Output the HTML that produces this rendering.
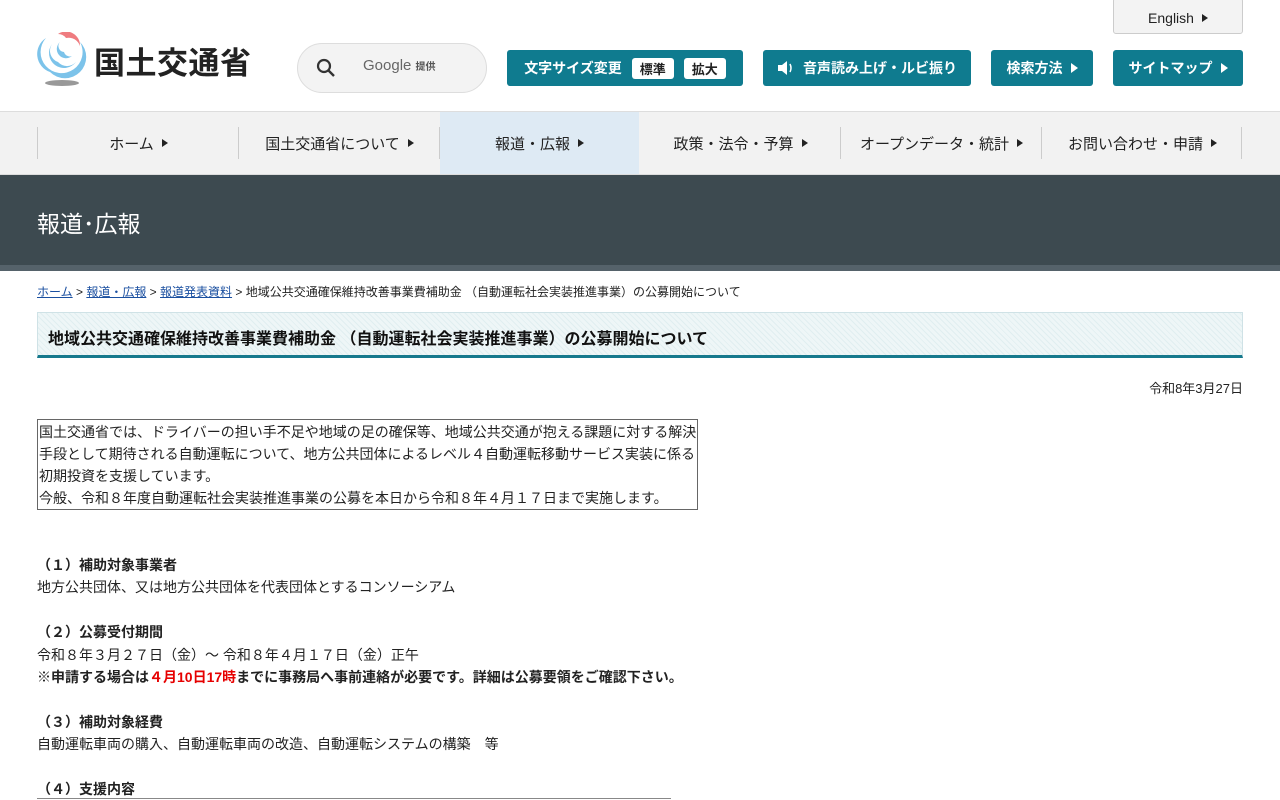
<!DOCTYPE html>
<html><head><meta charset="utf-8"><style>
*{margin:0;padding:0;box-sizing:border-box}
body{width:1280px;height:800px;overflow:hidden;background:#fff;font-family:"Liberation Sans","Noto Sans CJK JP",sans-serif;color:#222;font-size:14px;position:relative}
.abs{position:absolute}
.btn{position:absolute;top:50px;height:36px;background:#0f7b8f;color:#fff;border-radius:3px;font-size:14px;font-weight:bold;display:flex;align-items:center;justify-content:center}
.tri{display:inline-block;width:0;height:0;border-left:7px solid currentColor;border-top:5px solid transparent;border-bottom:5px solid transparent;margin-left:8px}
.tag{background:#fff;color:#222;border-radius:3px;padding:1px 8px;margin-left:10px;font-size:13px}
.nav{position:absolute;top:111px;left:0;width:1280px;height:64px;background:#f2f2f2;border-top:1px solid #ddd;border-bottom:1px solid #ddd}
.ni{position:absolute;top:0;height:62px;width:201px;display:flex;align-items:center;justify-content:center;font-size:15px;color:#222}
.ni .tri{border-left-width:6px;border-top-width:4px;border-bottom-width:4px}
.sep{position:absolute;top:15px;width:1px;height:32px;background:#ccc}
p.t{line-height:22px}
p.u{line-height:22.4px}
</style></head><body>
<svg class="abs" style="left:36px;top:32px" width="52" height="54" viewBox="0 0 52 54">
<path d="M10 6 A21 21 0 1 0 44 10 A16 16 0 0 1 14 40 A19 19 0 0 1 10 6Z" fill="#7cc3ea"/>
<path d="M22 2 A14 14 0 0 1 44 14 A12 12 0 0 0 30 6 A10 10 0 0 0 22 2Z" fill="#ef7c80"/>
<path d="M16 12 A14 14 0 0 0 40 30 A12 12 0 0 1 22 30 A12 12 0 0 1 16 12Z" fill="#7cc3ea"/>
<path d="M24 10 A8 8 0 0 0 36 24 A6 6 0 0 1 28 20 A6 6 0 0 1 24 10Z" fill="#7cc3ea"/>
<ellipse cx="26" cy="51" rx="17" ry="3" fill="#999"/>
</svg>
<div class="abs" style="left:94px;top:38px;font-size:31px;font-weight:bold;color:#222;letter-spacing:0.5px">国土交通省</div>
<div class="abs" style="left:297px;top:43px;width:190px;height:50px;border:1px solid #ddd;border-radius:25px;background:#f3f3f3"></div>
<svg class="abs" style="left:316px;top:58px" width="20" height="20" viewBox="0 0 20 20"><circle cx="8" cy="8" r="6" fill="none" stroke="#333" stroke-width="2.2"/><path d="M12.5 12.5L18 18" stroke="#333" stroke-width="2.4"/></svg>
<div class="abs" style="left:363px;top:57px;font-size:15px;color:#666">Google <span style="font-size:10px;font-weight:bold;color:#555">提供</span></div>
<div class="abs" style="left:1113px;top:-2px;width:130px;height:36px;background:#f3f3f3;border:1px solid #ccc;border-radius:3px;display:flex;align-items:center;justify-content:center;font-size:14px;color:#222;padding-top:3px">English<span class="tri" style="border-left-width:6px;border-top-width:4px;border-bottom-width:4px"></span></div>
<div class="btn" style="left:507px;width:236px">文字サイズ変更<span class="tag">標準</span><span class="tag">拡大</span></div>
<div class="btn" style="left:763px;width:208px"><svg width="18" height="16" viewBox="0 0 18 16" style="margin-right:8px"><path d="M1 5h4l5-4v14l-5-4H1z" fill="#fff"/><path d="M13 4q2 4 0 8" stroke="#fff" fill="none" stroke-width="1.5"/></svg>音声読み上げ・ルビ振り</div>
<div class="btn" style="left:991px;width:102px">検索方法<span class="tri"></span></div>
<div class="btn" style="left:1113px;width:130px">サイトマップ<span class="tri"></span></div>
<div class="nav">
<div class="ni" style="left:38px">ホーム<span class="tri"></span></div>
<div class="ni" style="left:239px">国土交通省について<span class="tri"></span></div>
<div class="ni" style="left:440px;width:199px;background:#deeaf4">報道・広報<span class="tri"></span></div>
<div class="ni" style="left:640px">政策・法令・予算<span class="tri"></span></div>
<div class="ni" style="left:841px">オープンデータ・統計<span class="tri"></span></div>
<div class="ni" style="left:1042px">お問い合わせ・申請<span class="tri"></span></div>
<div class="sep" style="left:37px"></div><div class="sep" style="left:238px"></div><div class="sep" style="left:439px"></div><div class="sep" style="left:840px"></div><div class="sep" style="left:1041px"></div><div class="sep" style="left:1241px"></div>
</div>
<div class="abs" style="left:0;top:175px;width:1280px;height:90px;background:#3d4a50"></div>
<div class="abs" style="left:0;top:265px;width:1280px;height:6px;background:#55626a"></div>
<div class="abs" style="left:37px;top:205px;font-size:23px;color:#fff">報道･広報</div>
<div class="abs" style="left:37px;top:283px;font-size:12px;color:#222"><u style="color:#1a4fa0">ホーム</u> &gt; <u style="color:#1a4fa0">報道・広報</u> &gt; <u style="color:#1a4fa0">報道発表資料</u> &gt; 地域公共交通確保維持改善事業費補助金 （自動運転社会実装推進事業）の公募開始について</div>
<div class="abs" style="left:37px;top:312px;width:1206px;height:46px;border:1px solid #cfe2e6;border-bottom:3px solid #16798d;background:repeating-linear-gradient(45deg,#eef6f7 0 3px,#e0eef0 3px 4px);padding:12px 10px;font-size:16px;font-weight:bold;color:#111">地域公共交通確保維持改善事業費補助金 （自動運転社会実装推進事業）の公募開始について</div>
<div class="abs" style="right:37px;top:378px;font-size:13px">令和8年3月27日</div>
<div class="abs" style="left:37px;top:419px;width:661px;height:91px;border:1px solid #666;padding:1px 0 0 1px"><p class="t">国土交通省では、ドライバーの担い手不足や地域の足の確保等、地域公共交通が抱える課題に対する解決手段として期待される自動運転について、地方公共団体によるレベル４自動運転移動サービス実装に係る初期投資を支援しています。<br>今般、令和８年度自動運転社会実装推進事業の公募を本日から令和８年４月１７日まで実施します。</p></div>
<div class="abs" style="left:37px;top:554px;width:680px">
<p class="u"><b>（１）補助対象事業者</b><br>地方公共団体、又は地方公共団体を代表団体とするコンソーシアム<br><br>
<b>（２）公募受付期間</b><br>令和８年３月２７日（金）～ 令和８年４月１７日（金）正午<br><b>※申請する場合は<span style="color:#e60000">４月10日17時</span>までに事務局へ事前連絡が必要です。詳細は公募要領をご確認下さい。</b><br><br>
<b>（３）補助対象経費</b><br>自動運転車両の購入、自動運転車両の改造、自動運転システムの構築　等<br><br>
<b>（４）支援内容</b></p>
</div>
<div class="abs" style="left:37px;top:798px;width:634px;height:1px;background:#888"></div>
</body></html>
